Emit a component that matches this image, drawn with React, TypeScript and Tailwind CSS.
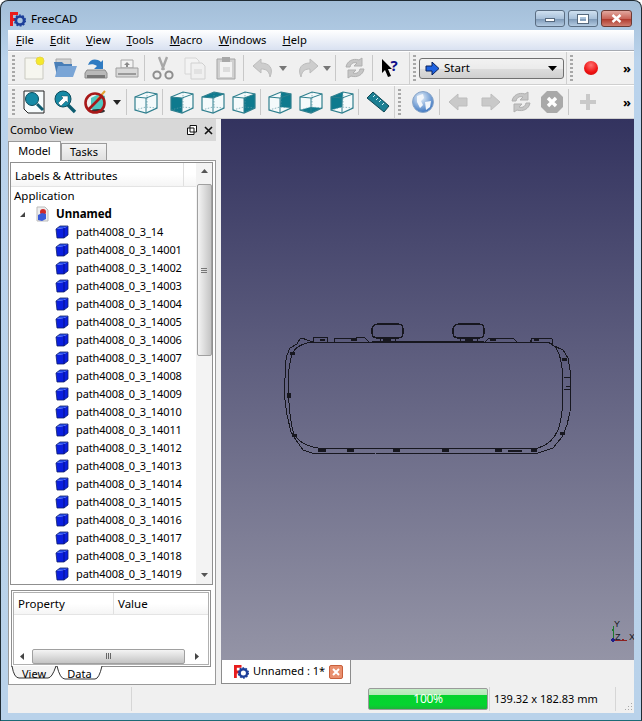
import React from "react";

const font = { fontFamily: '"Noto Sans", "Open Sans", sans-serif' };

function Sep({ w = "ml-0" }: { w?: string }) {
  return <div className={`h-[26px] w-px bg-[#c8c8c8] shrink-0 ${w}`} />;
}
function Grip() {
  return (
    <div className="w-[3px] h-[27px] shrink-0 bg-[repeating-linear-gradient(to_bottom,#a8a8a8_0,#a8a8a8_2px,transparent_2px,transparent_4px)]" />
  );
}
function Ico({ children, w = "w-[31px]" }: { children: React.ReactNode; w?: string }) {
  return (
    <div className={`${w} h-[24px] shrink-0 flex items-center justify-center`}>
      <svg width="24" height="24" viewBox="0 0 24 24">{children}</svg>
    </div>
  );
}
function Drop({ c = "#333", w = "w-[10px]" }: { c?: string; w?: string }) {
  return (
    <div className={`${w} shrink-0 flex justify-center`}>
      <svg width="8" height="5" viewBox="0 0 8 5"><path d="M0 0h8L4 5z" fill={c} /></svg>
    </div>
  );
}
function More() {
  return <div className="absolute right-[4px] top-[7px] text-[13px] font-bold leading-[18px] text-black tracking-[-1px]">»</div>;
}
function Cube({ face }: { face?: "front" | "top" | "right" | "rear" | "bottom" | "left" }) {
  const f: Record<string, string> = {
    front: "1,7 12,8 12,23 1,20",
    top: "1,7 13,2 23,4 12,8",
    right: "12,8 23,4 23,18 12,23",
    rear: "13,2 23,4 23,18 12,17",
    bottom: "1,20 12,17 23,18 12,23",
    left: "1,7 13,2 12,17 1,20",
  };
  return (
    <Ico>
      <polygon points="1,7 13,2 23,4 23,18 12,23 1,20" fill="#f4fafb" />
      {face && <polygon points={f[face]} fill="#0e7a8e" />}
      <path d="M13 2v15M1 20l11-3 11 1" stroke="#5d9aa6" strokeWidth=".7" strokeDasharray="1.5 1.5" fill="none" />
      <path d="M1 7l11 1 11-4M12 8v15" stroke="#2f7f8e" strokeWidth="1" fill="none" />
      <polygon points="1,7 13,2 23,4 23,18 12,23 1,20" fill="none" stroke="#2f7f8e" strokeWidth="1.2" />
    </Ico>
  );
}
function Logo({ size = 16 }: { size?: number }) {
  return (
    <svg width={size} height={size} viewBox="0 0 16 16">
      <path d="M0 1h8v3H3v3h3v3H3v5H0z" fill="#e81c1c" />
      <circle cx="10" cy="9.5" r="4" fill="none" stroke="#1d3f9a" strokeWidth="2.6" />
      <circle cx="10" cy="9.5" r="5.4" fill="none" stroke="#1d3f9a" strokeWidth="1.4" strokeDasharray="1.8 1.6" />
    </svg>
  );
}
function Part() {
  return (
    <svg width="14" height="14" viewBox="0 0 14 14" className="shrink-0">
      <polygon points="1,4 9,3 13,1 13,10 9,13 2,13" fill="#0a1fe0" />
      <polygon points="1,4 5,1 13,1 9,3" fill="#2a50f0" />
      <path d="M9 3v10" stroke="#04108a" strokeWidth="1" />
      <path d="M1 4l1 9h7l4-3V1H5z" fill="none" stroke="#10206a" strokeWidth=".8" />
    </svg>
  );
}
const names = ["path4008_0_3_14", ...Array.from({ length: 19 }, (_, i) => `path4008_0_3_140${String(i + 1).padStart(2, "0")}`)];

function Menu({ l, r }: { l: string; r: string }) {
  return <span><span className="underline">{l}</span>{r}</span>;
}

export default function App() {
  return (
    <div style={font} className="w-[642px] h-[721px] overflow-hidden flex flex-col rounded-t-[8px] border border-[#1f2b33] border-b-[#1d6a76] bg-[linear-gradient(to_bottom,#a3bed8,#bad3ec_60px,#b9d2ea)] text-[11.5px] text-black">
      {/* Title bar */}
      <div className="h-[29px] shrink-0 flex items-start pl-[9px] pr-[9px]">
        <div className="mt-[10px] flex items-center gap-[5px]">
          <Logo />
          <span className="text-[11.5px] leading-[16px]">FreeCAD</span>
        </div>
        <div className="ml-auto mt-[9px] flex gap-[3px]">
          <div className="w-[30px] h-[17px] rounded-[3px] border border-[#5a6d82] bg-[linear-gradient(to_bottom,#cfe0f0,#a9c1da_50%,#7f9ab8_55%,#b4cbe2)] flex items-center justify-center">
            <div className="w-[10px] h-[4px] mt-[3px] bg-white border border-[#56697e]" />
          </div>
          <div className="w-[30px] h-[17px] rounded-[3px] border border-[#5a6d82] bg-[linear-gradient(to_bottom,#cfe0f0,#a9c1da_50%,#7f9ab8_55%,#b4cbe2)] flex items-center justify-center">
            <div className="w-[10px] h-[8px] bg-transparent border-2 border-white outline outline-1 outline-[#56697e]" />
          </div>
          <div className="w-[31px] h-[17px] rounded-[3px] border border-[#6d3a33] bg-[linear-gradient(to_bottom,#e2a89f,#c9665a_50%,#b03b2e_55%,#cf7d70)] flex items-center justify-center">
            <svg width="11" height="9" viewBox="0 0 11 9"><path d="M1.5 1l8 7M9.5 1l-8 7" stroke="#fff" strokeWidth="2.4" /></svg>
          </div>
        </div>
      </div>

      {/* Client area */}
      <div className="mx-[7px] w-[626px] flex-1 mb-[7px] flex flex-col bg-[#f0f0f0]">
        {/* Menu */}
        <div className="h-[21px] shrink-0 flex items-center gap-[16px] pl-[8px] text-[11.2px] border-b border-[#a9adb5] bg-[linear-gradient(to_bottom,#ffffff,#d9e1f1)]">
          <Menu l="F" r="ile" />
          <Menu l="E" r="dit" />
          <Menu l="V" r="iew" />
          <Menu l="T" r="ools" />
          <Menu l="M" r="acro" />
          <Menu l="W" r="indows" />
          <Menu l="H" r="elp" />
        </div>

        {/* Toolbar 1 */}
        <div className="relative h-[34px] shrink-0 flex items-center pl-[4px] border-b border-[#cfcfcf] border-t border-t-white">
          <Grip />
          <div className="w-[3px] shrink-0" />
          <Ico>
            <path d="M3 2h13l5 5v16H3z" fill="#f6f6ef" stroke="#c9c9c0" />
            <circle cx="18" cy="5" r="4" fill="#f4e92b" stroke="#e8d54a" />
          </Ico>
          <Ico>
            <path d="M3 3h15v6H3z" fill="#d5d5d5" stroke="#aaa" />
            <path d="M1 6h8l2 2h8v12H4z" fill="#4a7fb8" />
            <path d="M5 10h19l-4 11H2z" fill="#7aa5d6" />
          </Ico>
          <Ico>
            <path d="M3 14h18l2 3v5H1v-5z" fill="#b9b9b9" stroke="#8c8c8c" />
            <path d="M3 19h18v3H3z" fill="#777" />
            <path d="M4 9c2-6 8-7 13-3l2-2v9h-9l3-3c-3-2-6-2-9-1z" fill="#2f7bc2" />
          </Ico>
          <Ico>
            <path d="M6 4h12v8H6z" fill="#f3f3f3" stroke="#a8a8a8" />
            <path d="M1 12h22v9H1z" fill="#d8d8d8" stroke="#a0a0a0" />
            <path d="M3 17h18v2H3z" fill="#9a9a9a" />
            <path d="M12 6l3 3h-2v2h-2V9H9z" fill="#8a8a8a" />
          </Ico>
          <div className="w-[2px] shrink-0" />
          <Sep />
          <div className="w-[2px] shrink-0" />
          <Ico w="w-[32px]">
            <path d="M8 1l5 13M16 1l-5 13" stroke="#a8a8a8" strokeWidth="2.4" />
            <circle cx="6" cy="19" r="3.6" fill="none" stroke="#8e8e8e" strokeWidth="2" />
            <circle cx="18" cy="19" r="3.6" fill="none" stroke="#8e8e8e" strokeWidth="2" />
          </Ico>
          <Ico>
            <path d="M2 2h11l3 3v13H2z" fill="#f3f3f3" stroke="#d6d6d6" />
            <path d="M8 7h11l3 3v13H8z" fill="#f0f0f0" stroke="#d0d0d0" />
            <path d="M11 13h8v5h-8z" fill="#e2e2e2" />
          </Ico>
          <Ico>
            <path d="M3 3h18v20H3z" fill="#d0d0d0" stroke="#a5a5a5" />
            <path d="M6 6h12v15H6z" fill="#f2f2f2" />
            <path d="M8 1h8v5H8z" fill="#a8a8a8" />
            <path d="M9 11h7v5H9z" fill="#dcdcdc" />
          </Ico>
          <div className="w-[2px] shrink-0" />
          <Sep />
          <div className="w-[5px] shrink-0" />
          <Ico w="w-[29px]">
            <path d="M9 3L1 10l8 7v-4c4 0 8 1 9 8 4-9-1-14-9-14z" fill="#cdcdcd" stroke="#bcbcbc" />
          </Ico>
          <Drop c="#777" />
          <div className="w-[3px] shrink-0" />
          <Ico w="w-[31px]">
            <path d="M15 3l8 7-8 7v-4c-4 0-8 1-9 8-4-9 1-14 9-14z" fill="#cdcdcd" stroke="#bcbcbc" />
          </Ico>
          <Drop c="#777" />
          <div className="w-[3px] shrink-0" />
          <Sep />
          <div className="w-[3px] shrink-0" />
          <Ico>
            <path d="M3 11C4 5 10 2 16 4l3-2v8h-8l3-3c-3-1-6 0-7 4z" fill="#c6c6c6" stroke="#b0b0b0" />
            <path d="M21 13c-1 6-7 9-13 7l-3 2v-8h8l-3 3c3 1 6 0 7-4z" fill="#c6c6c6" stroke="#b0b0b0" />
          </Ico>
          <div className="w-[2px] shrink-0" />
          <Sep />
          <div className="w-[1px] shrink-0" />
          <div className="w-[31px] h-[24px] shrink-0 flex items-center justify-center relative">
            <svg width="12" height="18" viewBox="0 0 12 18"><path d="M1 0l10 10H7l3 7-3 1-3-7-3 3z" fill="#000" /></svg>
            <span className="text-[15px] font-bold leading-[15px] text-[#10108a] -ml-[3px] -mt-[6px]">?</span>
          </div>
          <div className="w-[4px] shrink-0" />
          <div className="h-[32px] w-px bg-[#cfcfcf] shrink-0" />
          <div className="w-[3px] shrink-0" />
          <Grip />
          <div className="w-[3px] shrink-0" />
          <div className="w-[145px] h-[21px] shrink-0 rounded-[3px] border border-[#707070] bg-[linear-gradient(to_bottom,#f2f2f2,#ebebeb_50%,#dcdcdc_55%,#cfcfcf)] flex items-center pl-[5px] pr-[6px]">
            <svg width="15" height="13" viewBox="0 0 15 13"><path d="M1 4h6V0l7 6.5L7 13V9H1z" fill="#1e62e0" stroke="#08205a" /></svg>
            <span className="ml-[4px]">Start</span>
            <svg className="ml-auto" width="9" height="5" viewBox="0 0 9 5"><path d="M0 0h9L4.5 5z" fill="#000" /></svg>
          </div>
          <div className="w-px h-[32px] ml-[2px] bg-[#cfcfcf] shrink-0" />
          <div className="w-[3px] shrink-0" />
          <Grip />
          <div className="w-[11px] shrink-0" />
          <div className="w-[14px] h-[14px] rounded-full shrink-0 bg-[radial-gradient(circle_at_50%_30%,#ff7070,#ee1111_60%,#c50d0d)]" />
          <More />
        </div>

        {/* Toolbar 2 */}
        <div className="relative h-[34px] shrink-0 flex items-center pl-[4px] border-b border-[#cfcfcf] border-t border-t-white">
          <Grip />
          <div className="w-[3px] shrink-0" />
          <Ico>
            <path d="M2 1h20v22H6l-4-4z" fill="#f7fbfc" stroke="#222" />
            <circle cx="10" cy="9" r="6.5" fill="#168aa6" stroke="#0d4c5c" />
            <path d="M15 14l6 6" stroke="#0d5c70" strokeWidth="3" />
          </Ico>
          <Ico>
            <circle cx="10" cy="9" r="8" fill="#168aa6" stroke="#0d4c5c" />
            <path d="M15 15l7 7" stroke="#0d5c70" strokeWidth="3.4" />
            <path d="M5 13l5-5-2-2h7v7l-2-2-5 5z" fill="#fff" stroke="#0d4c5c" strokeWidth=".5" />
          </Ico>
          <Ico>
            <path d="M7 8l8-4 6 2v11l-8 5-6-3z" fill="#4fc7c0" />
            <path d="M13 10l8-9" stroke="#e0a030" strokeWidth="2" />
            <ellipse cx="14" cy="21" rx="7" ry="2" fill="#333" />
            <circle cx="11" cy="13" r="9.5" fill="none" stroke="#a81818" strokeWidth="2.6" />
            <path d="M4 20L18 6" stroke="#a81818" strokeWidth="2.6" />
          </Ico>
          <Drop c="#222" w="w-[12px]" />
          <div className="w-[3px] shrink-0" />
          <Sep />
          <div className="w-[3px] shrink-0" />
          <Cube />
          <div className="w-[1px] shrink-0" />
          <Sep />
          <div className="w-[3px] shrink-0" />
          <Cube face="front" />
          <Cube face="top" />
          <Cube face="right" />
          <div className="w-[1px] shrink-0" />
          <Sep />
          <div className="w-[3px] shrink-0" />
          <Cube face="rear" />
          <Cube face="bottom" />
          <Cube face="left" />
          <div className="w-[1px] shrink-0" />
          <Sep />
          <div className="w-[3px] shrink-0" />
          <Ico>
            <path d="M7 2l16 14-5 6L1 8z" fill="#1b7f93" stroke="#0e4654" />
            <path d="M7 7l2-2M10 10l2-2M13 12l2-2M16 15l2-2" stroke="#d7f0f4" strokeWidth="1" />
          </Ico>
          <div className="w-[1px] shrink-0" />
          <div className="h-[32px] w-px bg-[#cfcfcf] shrink-0" />
          <div className="w-[3px] shrink-0" />
          <Grip />
          <div className="w-[6px] shrink-0" />
          <Ico>
            <defs>
              <radialGradient id="gl" cx="40%" cy="30%" r="70%">
                <stop offset="0" stopColor="#e8f2fb" />
                <stop offset="1" stopColor="#3f78c2" />
              </radialGradient>
            </defs>
            <circle cx="12" cy="12" r="10.5" fill="url(#gl)" stroke="#8aa6c8" />
            <path d="M6 6l6-2 1 4-3 3 2 4-3 3-3-6zM14 12l6-1-1 6-4 3z" fill="#f2f6fb" />
          </Ico>
          <div className="w-[1px] shrink-0" />
          <Sep />
          <div className="w-[3px] shrink-0" />
          <Ico>
            <path d="M2 12l9-8v4h9v8h-9v4z" fill="#c9c9c9" stroke="#bdbdbd" />
          </Ico>
          <Ico>
            <path d="M22 12l-9-8v4H4v8h9v4z" fill="#c9c9c9" stroke="#bdbdbd" />
          </Ico>
          <Ico>
            <path d="M3 11C4 5 10 2 16 4l3-2v8h-8l3-3c-3-1-6 0-7 4z" fill="#c6c6c6" stroke="#b0b0b0" />
            <path d="M21 13c-1 6-7 9-13 7l-3 2v-8h8l-3 3c3 1 6 0 7-4z" fill="#c6c6c6" stroke="#b0b0b0" />
          </Ico>
          <Ico>
            <path d="M7 1h10l6 6v10l-6 6H7l-6-6V7z" fill="#a9a9a9" />
            <path d="M8 8l8 8M16 8l-8 8" stroke="#fff" strokeWidth="3.4" />
          </Ico>
          <div className="w-[1px] shrink-0" />
          <Sep />
          <div className="w-[3px] shrink-0" />
          <Ico>
            <path d="M10 4h4v6h6v4h-6v6h-4v-6H4v-4h6z" fill="#c9c9c9" />
          </Ico>
          <More />
        </div>

        {/* Main */}
        <div className="flex-1 flex min-h-0">
          {/* Dock */}
          <div className="w-[208px] shrink-0 flex flex-col">
            <div className="h-[22px] shrink-0 bg-[#d8d8d8] flex items-center pl-[2px] pr-[3px]">
              <span className="text-[11px] tracking-[-0.1px]">Combo View</span>
              <svg className="ml-auto" width="10" height="10" viewBox="0 0 10 10"><path d="M3 .5h6.5V7H3zM.5 3h6.5v6.5H.5z" fill="#fff" stroke="#111" /></svg>
              <svg className="ml-[7px]" width="9" height="9" viewBox="0 0 9 9"><path d="M1 1l7 7M8 1L1 8" stroke="#111" strokeWidth="1.6" /></svg>
            </div>
            {/* Tabs */}
            <div className="h-[20px] shrink-0 flex items-end text-[11px]">
              <div className="w-[53px] h-[20px] bg-white border border-b-0 border-[#9a9a9a] flex items-center justify-center relative z-10">Model</div>
              <div className="w-[46px] h-[18px] border border-b-0 border-[#9a9a9a] bg-[linear-gradient(to_bottom,#f4f4f4,#dfdfdf)] flex items-center justify-center">Tasks</div>
            </div>
            {/* Panel */}
            <div className="flex-1 min-h-0 bg-white border border-[#9a9a9a] flex flex-col pl-[1px] pr-[2px] pt-[0px] pb-[1px] -mt-px">
              {/* Tree */}
              <div className="h-[423px] shrink-0 mt-[1px] border border-[#8f8f8f] flex">
                <div className="flex-1 min-w-0 flex flex-col overflow-hidden">
                  <div className="h-[24px] shrink-0 flex items-center border-b border-[#e4e4e4] bg-[linear-gradient(to_bottom,#ffffff,#ffffff_50%,#f5f5f5)]">
                    <div className="w-[173px] pl-[4px] pt-[2px] border-r border-[#e0e0e0] h-full flex items-center">Labels &amp; Attributes</div>
                  </div>
                  <div className="h-[18px] shrink-0 pl-[3px] flex items-center">Application</div>
                  <div className="h-[18px] shrink-0 flex items-center pl-[8px]">
                    <svg width="7" height="7" viewBox="0 0 7 7"><path d="M6 1v5H1z" fill="#444" /></svg>
                    <svg className="ml-[9px]" width="14" height="16" viewBox="0 0 14 16">
                      <path d="M2 1h8l3 3v11H2z" fill="#eee" stroke="#bbb" />
                      <circle cx="8" cy="6" r="3" fill="#d02a2a" />
                      <path d="M3 9l4-2 4 1v5l-4 2-4-1z" fill="#3a5ad8" />
                    </svg>
                    <span className="ml-[7px] font-bold">Unnamed</span>
                  </div>
                  {names.map((n) => (
                    <div key={n} className="h-[18px] shrink-0 flex items-center pl-[44px] text-[11px] tracking-[-0.1px]">
                      <Part />
                      <span className="ml-[7px] whitespace-nowrap">{n}</span>
                    </div>
                  ))}
                </div>
                <div className="w-[16px] shrink-0 flex flex-col items-center bg-[#f3f3f3]">
                  <svg className="mt-[6px]" width="7" height="4" viewBox="0 0 7 4"><path d="M3.5 0L7 4H0z" fill="#555" /></svg>
                  <div className="mt-[11px] w-[15px] h-[172px] rounded-[2px] border border-[#a0a0a0] bg-[linear-gradient(to_right,#f4f4f4,#dcdcdc_50%,#c4c4c4)] flex flex-col items-center justify-center gap-px">
                    <div className="w-[6px] h-px bg-[#777]" />
                    <div className="w-[6px] h-px bg-[#777]" />
                    <div className="w-[6px] h-px bg-[#777]" />
                  </div>
                  <svg className="mt-auto mb-[7px]" width="7" height="4" viewBox="0 0 7 4"><path d="M0 0h7L3.5 4z" fill="#555" /></svg>
                </div>
              </div>
              {/* Properties */}
              <div className="h-[77px] shrink-0 mt-[5px] ml-px mr-[2px] border border-[#8f8f8f] p-px">
                <div className="h-full border border-[#b0b0b0] flex flex-col">
                  <div className="h-[22px] shrink-0 flex items-center border-b border-[#e4e4e4] bg-[linear-gradient(to_bottom,#ffffff,#ffffff_50%,#f5f5f5)]">
                    <div className="w-[100px] h-full pl-[4px] flex items-center border-r border-[#e0e0e0]">Property</div>
                    <div className="pl-[4px]">Value</div>
                  </div>
                  <div className="flex-1" />
                  <div className="h-[16px] shrink-0 flex items-center">
                    <svg className="ml-[6px]" width="4" height="7" viewBox="0 0 4 7"><path d="M4 0v7L0 3.5z" fill="#444" /></svg>
                    <div className="ml-[8px] w-[153px] h-[15px] rounded-[2px] border border-[#a0a0a0] bg-[linear-gradient(to_bottom,#f4f4f4,#dcdcdc_50%,#c4c4c4)] flex items-center justify-center gap-px">
                      <div className="h-[6px] w-px bg-[#666]" />
                      <div className="h-[6px] w-px bg-[#666]" />
                      <div className="h-[6px] w-px bg-[#666]" />
                    </div>
                    <svg className="ml-[10px]" width="4" height="7" viewBox="0 0 4 7"><path d="M0 0v7l4-3.5z" fill="#444" /></svg>
                  </div>
                </div>
              </div>
              {/* Bottom tabs */}
              <div className="h-[16px] shrink-0 flex items-start pl-[1px] -mt-px text-[11px]">
                <div className="relative w-[46px] h-[14px] flex items-center justify-center">
                  <svg className="absolute inset-0" width="46" height="14" viewBox="0 0 46 14">
                    <path d="M1 0Q3 12 8 12H37Q41 12 45 0" fill="#f4f4f4" stroke="#333" />
                  </svg>
                  <span className="relative leading-[13px]">View</span>
                </div>
                <div className="relative w-[47px] h-[15px] -ml-px flex items-center justify-center">
                  <svg className="absolute inset-0" width="47" height="15" viewBox="0 0 47 15">
                    <path d="M1 0Q4 13 9 13H39Q43 13 46 0" fill="#fff" stroke="#333" />
                  </svg>
                  <span className="relative leading-[13px]">Data</span>
                </div>
              </div>
            </div>
          </div>

          {/* Right */}
          <div className="flex-1 min-w-0 flex flex-col ml-[5px]">
            <div className="h-[541px] shrink-0 bg-[linear-gradient(to_bottom,#33335f,#9494a6)]">
              <svg className="block" width="413" height="541" viewBox="221 119 413 541" shapeRendering="crispEdges">
                <g fill="none" stroke="#17171f" strokeWidth="1" strokeLinejoin="round">
                  <path d="M312 342L545 342Q555 343 558 352C562 360 563 370 563 388C563 405 562 420 558 430Q552 444 538 448L318 448Q300 445 294 434C289 420 289 400 288 385C288 370 290 360 293 352Q298 344 312 342Z" />
                  <path d="M313 342L307 340Q303 338 300 339L297 344L290 348L287 355L285 365L286 372L284 385L285 400L287 415L291 432L296 440L303 450L312 453L320 454L345 453L352 454L375 453L440 454L470 453L538 453L553 448L562 437L567 425L570 412L571 388L570 370L568 358L563 350L552 345L552 339L532 338L530 342" />
                  <path d="M372 342h112" strokeWidth="2.2" />
                  <path d="M372 329q1-5 6-5h20q5 0 5 5v4q0 5-5 5h-20q-6 0-6-5z" strokeWidth="1.4" />
                  <path d="M453 329q1-5 6-5h20q5 0 5 5v4q0 5-5 5h-20q-6 0-6-5z" strokeWidth="1.4" />
                  <path d="M380 338v4M395 338v4M460 338v4M477 338v4" />
                  <path d="M313 342v-5h14v5M334 342v-4h22l8-1 5 5" />
                  <path d="M485 342l4-4h24l4 4M531 342v-4h9" />
                  <path d="M564 378l6-1v12l-6 1M566 386h5" />
                </g>
                <g fill="#17171f">
                  <rect x="318" y="449" width="8" height="3" />
                  <rect x="347" y="449" width="7" height="3" />
                  <rect x="393" y="449" width="7" height="3" />
                  <rect x="442" y="449" width="7" height="3" />
                  <rect x="495" y="449" width="7" height="3" />
                  <rect x="508" y="450" width="14" height="2" />
                  <rect x="531" y="449" width="6" height="3" />
                  <rect x="383" y="338" width="8" height="3" />
                  <rect x="465" y="338" width="8" height="3" />
                  <rect x="351" y="338" width="6" height="3" />
                  <rect x="320" y="339" width="5" height="2" />
                  <rect x="490" y="338" width="6" height="3" />
                  <rect x="534" y="338" width="5" height="3" />
                  <rect x="287" y="393" width="4" height="5" />
                  <rect x="290" y="352" width="5" height="3" />
                  <rect x="562" y="358" width="5" height="3" />
                  <rect x="292" y="434" width="5" height="3" />
                  <rect x="560" y="432" width="5" height="3" />
                </g>
                <path d="M613 640v-14" stroke="#1c7a2c" />
                <path d="M613 640h14" stroke="#8c2020" />
                <circle cx="613" cy="640" r="1.8" fill="#20208a" />
                <circle cx="613" cy="630" r="1" fill="#1c7a2c" />
                <circle cx="623" cy="640" r="1" fill="#8c2020" />
                <g fill="#14141c" fontSize="9" fontFamily="Liberation Sans, sans-serif">
                  <text x="614" y="627">Y</text>
                  <text x="615" y="640">Z</text>
                  <text x="629" y="640">X</text>
                </g>
              </svg>
            </div>
            <div className="h-[25px] shrink-0 flex items-start">
              <div className="w-[130px] h-[24px] bg-white border border-t-0 border-[#8c8c8c] flex items-center pl-[12px]">
                <Logo size={15} />
                <span className="ml-[4px] whitespace-nowrap text-[11px]">Unnamed : 1*</span>
                <div className="ml-[4px] w-[14px] h-[14px] rounded-[2px] bg-[#e98f6e] border border-[#c9603c] flex items-center justify-center">
                  <svg width="8" height="8" viewBox="0 0 8 8"><path d="M1 1l6 6M7 1L1 7" stroke="#fff" strokeWidth="2" /></svg>
                </div>
              </div>
            </div>
          </div>
        </div>

        {/* Status bar */}
        <div className="h-[28px] shrink-0 flex items-center">
          <div className="w-[123px] shrink-0" />
          <div className="w-px h-[24px] bg-[#d6d6d6] shrink-0" />
          <div className="w-[236px] shrink-0" />
          <div className="w-[120px] h-[22px] shrink-0 rounded-[2px] border border-[#9a9a9a] bg-[linear-gradient(to_bottom,#c4eec6,#b5e8b8_28%,#04d32e_30%,#06d430_80%,#1cb53a)] flex items-center justify-center text-white text-[12px] tracking-[-0.3px]">100%</div>
          <div className="w-px h-[24px] ml-[1px] bg-[#d6d6d6] shrink-0" />
          <span className="ml-[4px] whitespace-nowrap text-[11px]">139.32 x 182.83 mm</span>
          <div className="w-px h-[24px] ml-auto mr-[18px] bg-[#d6d6d6] shrink-0 relative">
            <svg className="absolute left-[9px] top-[15px]" width="9" height="9" viewBox="0 0 9 9">
              <path d="M7 1h1v1H7zM4 4h1v1H4zM7 4h1v1H7zM1 7h1v1H1zM4 7h1v1H4zM7 7h1v1H7z" fill="#a8a8a8" />
            </svg>
          </div>
        </div>
      </div>
    </div>
  );
}
